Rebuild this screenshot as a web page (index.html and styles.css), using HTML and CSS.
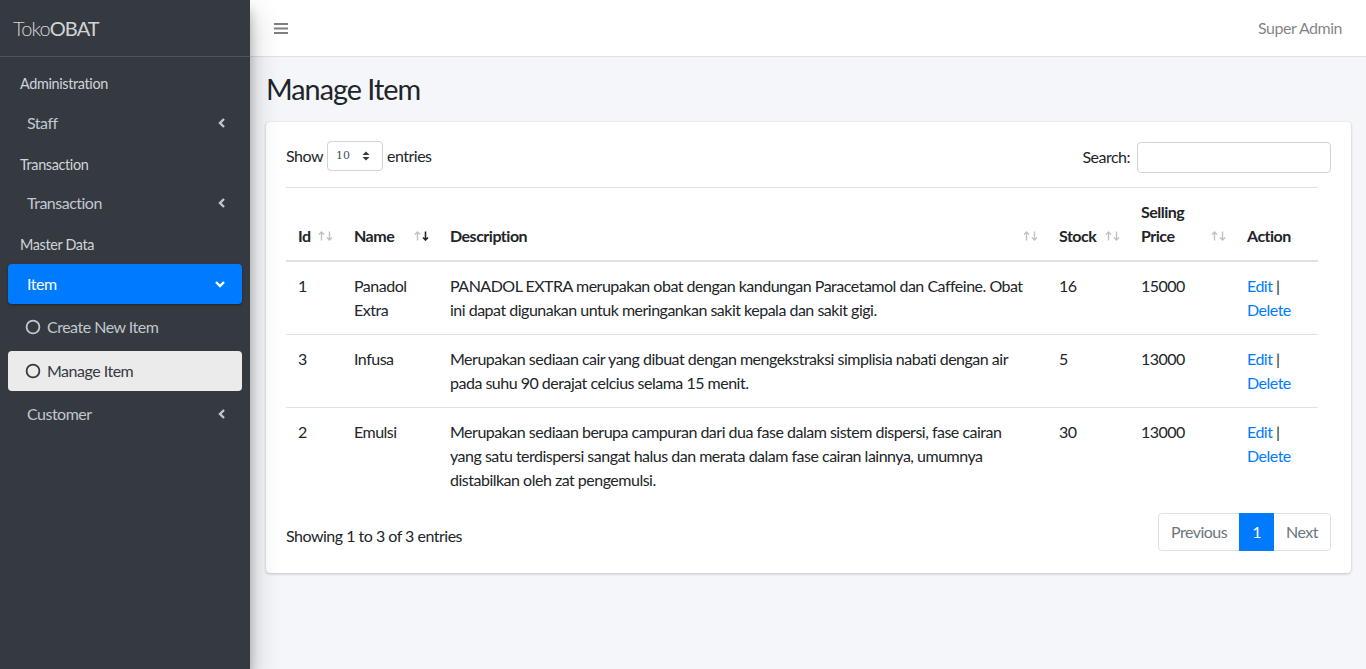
FILE: index.html
```html
<!DOCTYPE html>
<html>
<head>
<meta charset="utf-8">
<link rel="stylesheet" href="styles.css">
</head>
<body>
<div class="wrapper">
  <aside class="sidebar">
    <div class="brand"><span class="light">Toko</span>OBAT</div>
    <nav class="nav">
      <div class="nav-header">Administration</div>
      <div class="nav-link"><span>Staff</span><svg class="chev" width="8" height="12" viewBox="0 0 8 12"><polyline points="6,2 2,6 6,10" fill="none" stroke="currentColor" stroke-width="2.4"/></svg></div>
      <div class="nav-header">Transaction</div>
      <div class="nav-link"><span>Transaction</span><svg class="chev" width="8" height="12" viewBox="0 0 8 12"><polyline points="6,2 2,6 6,10" fill="none" stroke="currentColor" stroke-width="2.4"/></svg></div>
      <div class="nav-header">Master Data</div>
      <div class="nav-link active"><span>Item</span><svg class="chev-down" width="12" height="8" viewBox="0 0 12 8"><polyline points="2,2 6,6 10,2" fill="none" stroke="currentColor" stroke-width="2.4"/></svg></div>
      <div class="nav-link sub"><svg class="circ" width="16" height="16" viewBox="0 0 16 16"><circle cx="8" cy="8" r="6.4" fill="none" stroke="currentColor" stroke-width="1.8"/></svg><span>Create New Item</span></div>
      <div class="nav-link sub current"><svg class="circ" width="16" height="16" viewBox="0 0 16 16"><circle cx="8" cy="8" r="6.4" fill="none" stroke="currentColor" stroke-width="1.8"/></svg><span>Manage Item</span></div>
      <div class="nav-link"><span>Customer</span><svg class="chev" width="8" height="12" viewBox="0 0 8 12"><polyline points="6,2 2,6 6,10" fill="none" stroke="currentColor" stroke-width="2.4"/></svg></div>
    </nav>
  </aside>
  <div class="main">
    <header class="navbar">
      <svg class="bars" width="14" height="13" viewBox="0 0 14 13"><rect x="0" y="1" width="14" height="2" fill="currentColor"/><rect x="0" y="5.5" width="14" height="2" fill="currentColor"/><rect x="0" y="10" width="14" height="2" fill="currentColor"/></svg>
      <span class="user">Super Admin</span>
    </header>
    <section class="content">
      <h1 class="title">Manage Item</h1>
      <div class="card">
        <div class="toolbar">
          <div class="length">Show <span class="select">10<svg width="8" height="10" viewBox="0 0 8 10"><polygon points="4,0.5 7.5,4 0.5,4" fill="#343a40"/><polygon points="4,9.5 7.5,6 0.5,6" fill="#343a40"/></svg></span> entries</div>
          <div class="filter">Search: <span class="input"></span></div>
        </div>
        <table class="table">
          <colgroup>
            <col class="c-id"><col class="c-name"><col class="c-desc"><col class="c-stock"><col class="c-price"><col class="c-act">
          </colgroup>
          <thead>
            <tr>
              <th class="sort">Id<svg class="arr" width="16" height="10" viewBox="0 0 16 10"><path d="M3.5 9.5V1M1 3.5L3.5 1 6 3.5" fill="none" stroke="#bfc1c3" stroke-width="1.4"/><path d="M11.5 0.5V9M9 6.5L11.5 9 14 6.5" fill="none" stroke="#bfc1c3" stroke-width="1.4"/></svg></th>
              <th class="sort">Name<svg class="arr" width="16" height="10" viewBox="0 0 16 10"><path d="M3.5 9.5V1M1 3.5L3.5 1 6 3.5" fill="none" stroke="#bfc1c3" stroke-width="1.4"/><path d="M11.5 0.5V9M9 6.5L11.5 9 14 6.5" fill="none" stroke="#212529" stroke-width="1.6"/></svg></th>
              <th class="sort">Description<svg class="arr" width="16" height="10" viewBox="0 0 16 10"><path d="M3.5 9.5V1M1 3.5L3.5 1 6 3.5" fill="none" stroke="#bfc1c3" stroke-width="1.4"/><path d="M11.5 0.5V9M9 6.5L11.5 9 14 6.5" fill="none" stroke="#bfc1c3" stroke-width="1.4"/></svg></th>
              <th class="sort">Stock<svg class="arr" width="16" height="10" viewBox="0 0 16 10"><path d="M3.5 9.5V1M1 3.5L3.5 1 6 3.5" fill="none" stroke="#bfc1c3" stroke-width="1.4"/><path d="M11.5 0.5V9M9 6.5L11.5 9 14 6.5" fill="none" stroke="#bfc1c3" stroke-width="1.4"/></svg></th>
              <th class="sort">Selling Price<svg class="arr" width="16" height="10" viewBox="0 0 16 10"><path d="M3.5 9.5V1M1 3.5L3.5 1 6 3.5" fill="none" stroke="#bfc1c3" stroke-width="1.4"/><path d="M11.5 0.5V9M9 6.5L11.5 9 14 6.5" fill="none" stroke="#bfc1c3" stroke-width="1.4"/></svg></th>
              <th>Action</th>
            </tr>
          </thead>
          <tbody>
            <tr>
              <td>1</td><td>Panadol Extra</td>
              <td>PANADOL EXTRA merupakan obat dengan kandungan Paracetamol dan Caffeine. Obat ini dapat digunakan untuk meringankan sakit kepala dan sakit gigi.</td>
              <td>16</td><td>15000</td><td><a class="link">Edit</a> | <a class="link">Delete</a></td>
            </tr>
            <tr>
              <td>3</td><td>Infusa</td>
              <td>Merupakan sediaan cair yang dibuat dengan mengekstraksi simplisia nabati dengan air pada suhu 90 derajat celcius selama 15 menit.</td>
              <td>5</td><td>13000</td><td><a class="link">Edit</a> | <a class="link">Delete</a></td>
            </tr>
            <tr>
              <td>2</td><td>Emulsi</td>
              <td>Merupakan sediaan berupa campuran dari dua fase dalam sistem dispersi, fase cairan yang satu terdispersi sangat halus dan merata dalam fase cairan lainnya, umumnya distabilkan oleh zat pengemulsi.</td>
              <td>30</td><td>13000</td><td><a class="link">Edit</a> | <a class="link">Delete</a></td>
            </tr>
          </tbody>
        </table>
        <div class="footer-row">
          <div class="info">Showing 1 to 3 of 3 entries</div>
          <div class="pagination">
            <span class="page disabled">Previous</span>
            <span class="page current-page">1</span>
            <span class="page disabled">Next</span>
          </div>
        </div>
      </div>
    </section>
  </div>
</div>
</body>
</html>
```
FILE: styles.css
```css
* { box-sizing: border-box; }
html, body { margin: 0; padding: 0; }
body {
  font-family: "Lato", "Liberation Sans", sans-serif;
  font-size: 16px;
  line-height: 24px;
  letter-spacing: -0.5px;
  color: #212529;
  background: #f4f6f9;
}
.wrapper { display: flex; min-height: 669px; }
.sidebar {
  width: 250px;
  flex: 0 0 250px;
  background: #343a40;
  min-height: 669px;
  position: relative;
  z-index: 2;
  box-shadow: 0 14px 28px rgba(0,0,0,.25), 0 10px 10px rgba(0,0,0,.22);
}
.brand {
  height: 57px;
  border-bottom: 1px solid #4b545c;
  padding: 0 13px;
  display: flex;
  align-items: center;
  font-size: 20px;
  letter-spacing: -0.9px;
  color: rgba(255,255,255,.8);
}
.brand .light { font-weight: 300; }
.nav { padding: 8px 8px 0; display: flex; flex-direction: column; }
.nav-header {
  height: 37.6px;
  padding: 0 12px;
  display: flex;
  align-items: center;
  font-size: 14.4px;
  letter-spacing: -0.35px;
  color: #d0d4db;
}
.nav-link {
  height: 40px;
  margin-bottom: 3.2px;
  padding: 0 16px 0 19px;
  display: flex;
  align-items: center;
  color: #c2c7d0;
  border-radius: 4px;
}
.nav-link span { flex: 1; }
.nav-link.active {
  background: #007bff;
  color: #fff;
  box-shadow: 0 1px 3px rgba(0,0,0,.12), 0 1px 2px rgba(0,0,0,.24);
}
.nav-link.sub { padding-left: 17px; }
.nav-link.sub .circ { margin-right: 6px; }
.nav-link.current { background: rgba(255,255,255,.9); color: #343a40; }
.main { flex: 1; display: flex; flex-direction: column; min-width: 0; }
.navbar {
  height: 57px;
  background: #fff;
  border-bottom: 1px solid #dee2e6;
  display: flex;
  align-items: center;
  justify-content: space-between;
  padding: 0 24px 0 24px;
  color: rgba(0,0,0,.5);
}
.bars { margin-top: 1px; }
.content { padding: 15px 15px 0 16px; }
.title {
  margin: 0 0 15px;
  font-size: 28.8px;
  line-height: 34.5px;
  font-weight: 400;
  letter-spacing: -1px;
  color: #212529;
}
.card {
  background: #fff;
  border-radius: 4px;
  box-shadow: 0 0 1px rgba(0,0,0,.125), 0 1px 3px rgba(0,0,0,.2);
  padding: 20px 20px 22px;
}
.toolbar { display: flex; justify-content: space-between; align-items: flex-start; height: 39px; }
.length { display: flex; align-items: center; height: 30px; gap: 4px; margin-top: -1px; }
.select {
  width: 56px;
  height: 30px;
  border: 1px solid #ced4da;
  border-radius: 4px;
  display: inline-flex;
  align-items: center;
  justify-content: space-between;
  padding: 0 12px 0 8px;
  font-family: "DejaVu Serif", serif;
  font-size: 11px;
  letter-spacing: 0;
  color: #495057;
}
.filter { display: flex; align-items: center; gap: 7px; height: 31px; }
.input {
  width: 194px;
  height: 31px;
  border: 1px solid #ced4da;
  border-radius: 4px;
  display: inline-block;
}
.table {
  width: 1032px;
  border-collapse: collapse;
  table-layout: fixed;
  margin-top: 6px;
  margin-bottom: 6px;
}
.c-id { width: 56px; } .c-name { width: 96px; } .c-desc { width: 609px; }
.c-stock { width: 82px; } .c-price { width: 106px; } .c-act { width: 83px; }
.table th {
  text-align: left;
  font-weight: 700;
  vertical-align: bottom;
  padding: 12px;
  border-top: 1px solid #dee2e6;
  border-bottom: 2px solid #dee2e6;
  position: relative;
}
.table th.sort { padding-right: 30px; }
.arr { position: absolute; right: 8px; bottom: 19px; }
.table td {
  vertical-align: top;
  padding: 12px;
  border-top: 1px solid #dee2e6;
}
.link { color: #007bff; }
.footer-row { display: flex; justify-content: space-between; align-items: flex-start; padding-top: 3px; }
.info { padding-top: 11px; }
.pagination { display: flex; }
.page {
  height: 38px;
  padding: 0 12px;
  display: flex;
  align-items: center;
  border: 1px solid #dee2e6;
  margin-left: -1px;
  color: #6c757d;
  background: #fff;
}
.page:first-child { border-radius: 4px 0 0 4px; }
.page:last-child { border-radius: 0 4px 4px 0; }
.current-page { background: #007bff; border-color: #007bff; color: #fff; position: relative; z-index: 1; }
```
